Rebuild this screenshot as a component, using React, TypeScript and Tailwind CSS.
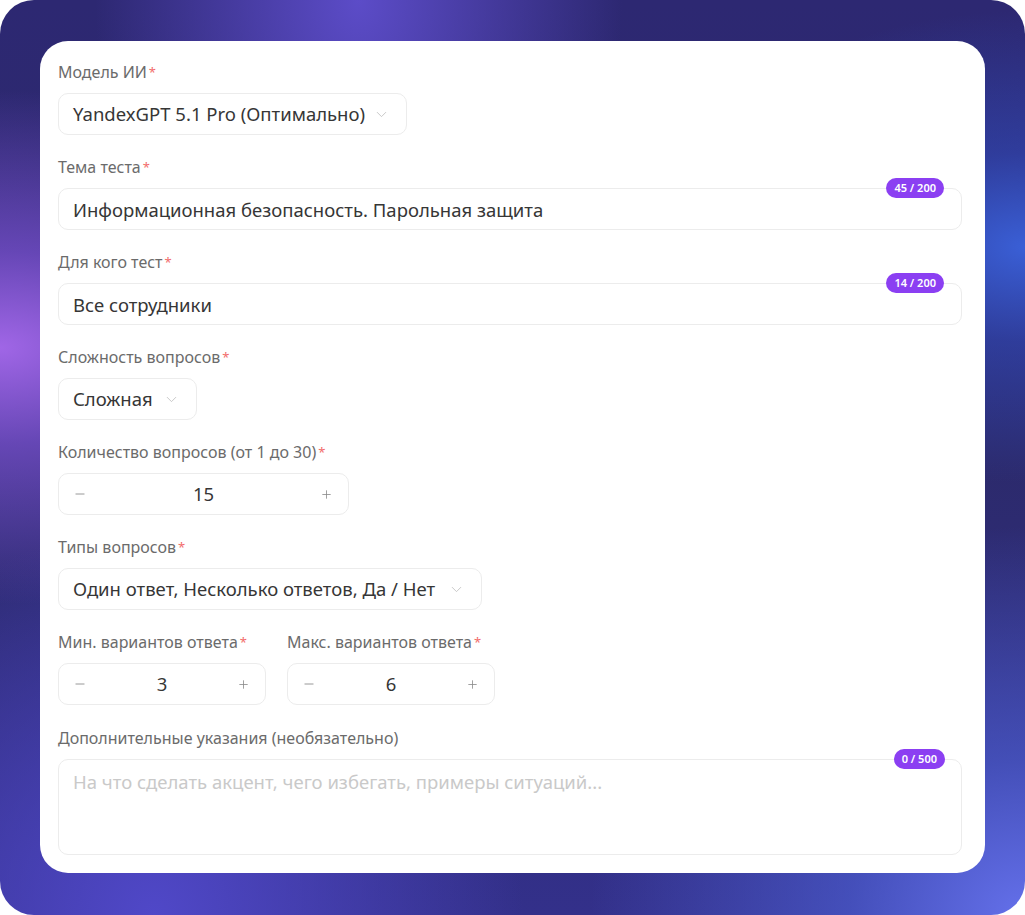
import React, { useState } from "react";
import { ChevronDown, Minus, Plus } from "lucide-react";

const font = { fontFamily: '"Noto Sans", "Open Sans", Arial, sans-serif' };

function Label({ text, required = true }: any) {
  return (
    <div className="text-[16px] leading-[20px] text-[#6b6b6b] mb-[11px]">
      {text}
      {required && <span className="text-[#f26b6b] text-[13px] align-top ml-[2px]">*</span>}
    </div>
  );
}

function Select({ value, width }: any) {
  return (
    <div
      className={`flex items-center justify-between h-[42px] rounded-[10px] border border-[#ececec] bg-white pl-[14px] pr-[16px] ${width}`}
    >
      <span className="text-[18.5px] text-[#363636] whitespace-nowrap">{value}</span>
      <ChevronDown size={17} strokeWidth={1.3} className="text-[#c4c4c4] ml-2 shrink-0" />
    </div>
  );
}

function Counter({ used, max, right }: any) {
  return (
    <span
      className={`absolute -top-[10px] ${right} h-[20px] px-[8px] rounded-full bg-[#8b3ff2] text-white text-[11px] font-semibold leading-[20px]`}
    >
      {used} / {max}
    </span>
  );
}

function Stepper({ value, width, onChange }: any) {
  return (
    <div className={`flex items-center justify-between h-[42px] rounded-[10px] border border-[#ececec] bg-white pl-[14px] pr-[15px] ${width}`}>
      <button onClick={() => onChange(value - 1)} className="text-[#8a8a8a]">
        <Minus size={14} strokeWidth={1.5} />
      </button>
      <span className="text-[18.5px] text-[#363636]">{value}</span>
      <button onClick={() => onChange(value + 1)} className="text-[#8a8a8a]">
        <Plus size={13} strokeWidth={1.5} />
      </button>
    </div>
  );
}

export default function App() {
  const [count, setCount] = useState(15);
  const [minOpts, setMinOpts] = useState(3);
  const [maxOpts, setMaxOpts] = useState(6);
  const [topic, setTopic] = useState("Информационная безопасность. Парольная защита");
  const [audience, setAudience] = useState("Все сотрудники");
  const [notes, setNotes] = useState("");

  return (
    <div className="w-[1025px] h-[915px] bg-white" style={font}>
      <div className="w-full h-full rounded-[34px] pt-[41px] pb-[42px] px-[40px] bg-[radial-gradient(ellipse_at_0%_38%,#a066e6_0%,rgba(140,90,230,0.6)_12%,transparent_32%),radial-gradient(ellipse_at_100%_27%,#3a5fd6_0%,rgba(50,80,200,0.5)_10%,transparent_25%),radial-gradient(ellipse_at_100%_100%,#6470ea_0%,rgba(80,100,220,0.6)_12%,transparent_30%),radial-gradient(ellipse_at_35%_0%,#5c4cc8_0%,transparent_28%),radial-gradient(ellipse_at_15%_100%,#5048c8_0%,transparent_30%),linear-gradient(180deg,#2d2872_0%,#2c2a6c_50%,#33308a_100%)]">
        <div className="h-full bg-white rounded-[28px] pt-[21px] pl-[18px] pr-[23px] pb-[18px]">
          <Label text="Модель ИИ" />
          <Select value="YandexGPT 5.1 Pro (Оптимально)" width="w-[349px]" />

          <div className="mt-[22px]">
            <Label text="Тема теста" />
            <div className="relative">
              <input
                value={topic}
                onChange={(e) => setTopic(e.target.value)}
                className="w-full h-[42px] rounded-[10px] border border-[#ececec] px-[14px] text-[18.5px] text-[#363636] outline-none"
              />
              <Counter used={topic.length} max={200} right="right-[18px]" />
            </div>
          </div>

          <div className="mt-[22px]">
            <Label text="Для кого тест" />
            <div className="relative">
              <input
                value={audience}
                onChange={(e) => setAudience(e.target.value)}
                className="w-full h-[42px] rounded-[10px] border border-[#ececec] px-[14px] text-[18.5px] text-[#363636] outline-none"
              />
              <Counter used={audience.length} max={200} right="right-[18px]" />
            </div>
          </div>

          <div className="mt-[22px]">
            <Label text="Сложность вопросов" />
            <Select value="Сложная" width="w-[139px]" />
          </div>

          <div className="mt-[22px]">
            <Label text="Количество вопросов (от 1 до 30)" />
            <Stepper value={count} onChange={setCount} width="w-[291px]" />
          </div>

          <div className="mt-[22px]">
            <Label text="Типы вопросов" />
            <Select value="Один ответ, Несколько ответов, Да / Нет" width="w-[424px]" />
          </div>

          <div className="mt-[22px] flex gap-[21px]">
            <div>
              <Label text="Мин. вариантов ответа" />
              <Stepper value={minOpts} onChange={setMinOpts} width="w-[208px]" />
            </div>
            <div>
              <Label text="Макс. вариантов ответа" />
              <Stepper value={maxOpts} onChange={setMaxOpts} width="w-[208px]" />
            </div>
          </div>

          <div className="mt-[23px]">
            <Label text="Дополнительные указания (необязательно)" required={false} />
            <div className="relative">
              <textarea
                value={notes}
                onChange={(e) => setNotes(e.target.value)}
                placeholder="На что сделать акцент, чего избегать, примеры ситуаций..."
                className="block w-full h-[96px] resize-none rounded-[10px] border border-[#ececec] px-[14px] py-[8px] text-[18.5px] text-[#363636] placeholder:text-[#c9c9c9] outline-none"
              />
              <Counter used={notes.length} max={500} right="right-[17px]" />
            </div>
          </div>
        </div>
      </div>
    </div>
  );
}
